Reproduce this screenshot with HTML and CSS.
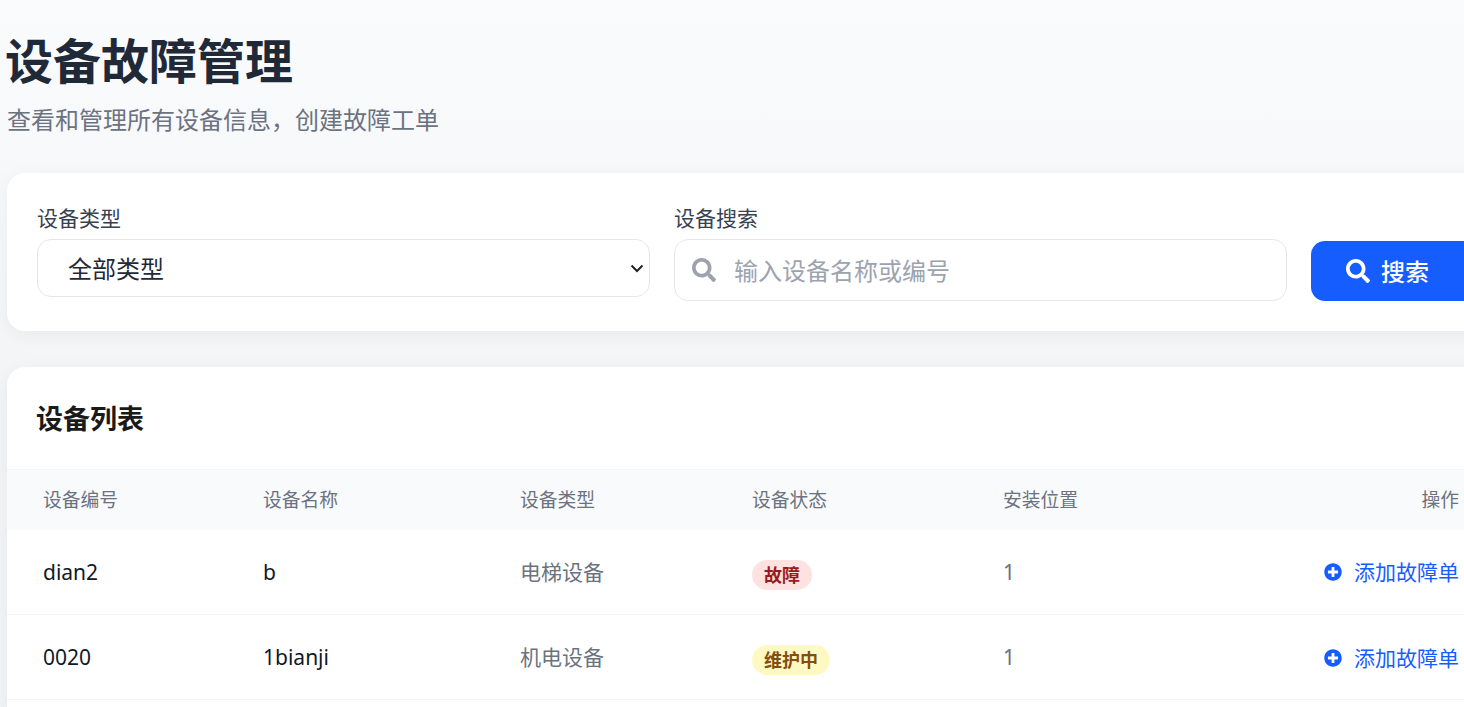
FILE: index.html
```html
<!DOCTYPE html>
<html lang="zh">
<head>
<meta charset="utf-8">
<title>设备故障管理</title>
<link rel="stylesheet" href="styles.css">
</head>
<body>
<main class="page">
  <header class="page-head">
    <h1 class="title">设备故障管理</h1>
    <p class="subtitle">查看和管理所有设备信息，创建故障工单</p>
  </header>
  <section class="card filters">
    <div class="field">
      <label class="label">设备类型</label>
      <select class="select"><option>全部类型</option></select>
    </div>
    <div class="field">
      <label class="label">设备搜索</label>
      <div class="search-box">
        <svg class="icon-search muted" viewBox="0 0 512 512"><path d="M505 442.7L405.3 343c-4.5-4.5-10.6-7-17-7H372c27.6-35.3 44-79.7 44-128C416 93.1 322.9 0 208 0S0 93.1 0 208s93.1 208 208 208c48.3 0 92.7-16.4 128-44v16.3c0 6.4 2.5 12.5 7 17l99.7 99.7c9.4 9.4 24.6 9.4 33.9 0l28.3-28.3c9.4-9.4 9.4-24.6.1-34zM208 336c-70.7 0-128-57.2-128-128 0-70.7 57.2-128 128-128 70.7 0 128 57.2 128 128 0 70.7-57.2 128-128 128z"/></svg>
        <input class="input" placeholder="输入设备名称或编号">
      </div>
    </div>
    <button class="btn">
      <svg class="icon-search" viewBox="0 0 512 512"><path d="M505 442.7L405.3 343c-4.5-4.5-10.6-7-17-7H372c27.6-35.3 44-79.7 44-128C416 93.1 322.9 0 208 0S0 93.1 0 208s93.1 208 208 208c48.3 0 92.7-16.4 128-44v16.3c0 6.4 2.5 12.5 7 17l99.7 99.7c9.4 9.4 24.6 9.4 33.9 0l28.3-28.3c9.4-9.4 9.4-24.6.1-34zM208 336c-70.7 0-128-57.2-128-128 0-70.7 57.2-128 128-128 70.7 0 128 57.2 128 128 0 70.7-57.2 128-128 128z"/></svg>
      <span>搜索</span>
    </button>
  </section>
  <section class="card list">
    <h2 class="list-title">设备列表</h2>
    <table class="table">
      <thead>
        <tr>
          <th class="col-id">设备编号</th>
          <th class="col-name">设备名称</th>
          <th class="col-type">设备类型</th>
          <th class="col-status">设备状态</th>
          <th class="col-loc">安装位置</th>
          <th class="col-act">操作</th>
        </tr>
      </thead>
      <tbody>
        <tr>
          <td class="strong">dian2</td>
          <td class="strong">b</td>
          <td>电梯设备</td>
          <td class="status"><span class="badge badge-fault">故障</span></td>
          <td class="num">1</td>
          <td class="col-act"><a class="link"><svg class="icon-plus" viewBox="0 0 512 512"><path d="M256 8C119 8 8 119 8 256s111 248 248 248 248-111 248-248S393 8 256 8zm144 276c0 6.6-5.4 12-12 12h-92v92c0 6.6-5.4 12-12 12h-56c-6.6 0-12-5.4-12-12v-92h-92c-6.6 0-12-5.4-12-12v-56c0-6.6 5.4-12 12-12h92v-92c0-6.6 5.4-12 12-12h56c6.6 0 12 5.4 12 12v92h92c6.6 0 12 5.4 12 12v56z"/></svg>添加故障单</a></td>
        </tr>
        <tr>
          <td class="strong">0020</td>
          <td class="strong">1bianji</td>
          <td>机电设备</td>
          <td class="status"><span class="badge badge-maint">维护中</span></td>
          <td class="num">1</td>
          <td class="col-act"><a class="link"><svg class="icon-plus" viewBox="0 0 512 512"><path d="M256 8C119 8 8 119 8 256s111 248 248 248 248-111 248-248S393 8 256 8zm144 276c0 6.6-5.4 12-12 12h-92v92c0 6.6-5.4 12-12 12h-56c-6.6 0-12-5.4-12-12v-92h-92c-6.6 0-12-5.4-12-12v-56c0-6.6 5.4-12 12-12h92v-92c0-6.6 5.4-12 12-12h56c6.6 0 12 5.4 12 12v92h92c6.6 0 12 5.4 12 12v56z"/></svg>添加故障单</a></td>
        </tr>
      </tbody>
    </table>
  </section>
</main>
</body>
</html>
```
FILE: styles.css
```css
* { box-sizing: border-box; }
html, body { margin: 0; height: 100%; overflow: hidden; }
body {
  background: linear-gradient(180deg, #fafbfc 0, #f8f9fb 120px, #f3f4f6 420px);
  font-family: "Noto Sans", "Noto Sans CJK SC", sans-serif;
  color: #1f2937;
}
.page { width: 1487px; margin-left: 7px; padding-top: 26px; }
.page-head { height: 147px; }
.title { margin: 0 0 0 -2px; padding-top: 1px; font-size: 48px; line-height: 68px; font-weight: 700; color: #1f2937; }
.subtitle { margin: 0; font-size: 24px; line-height: 36px; padding-top: 7px; color: #6b7280; }
.card { background: #fff; border-radius: 18px; box-shadow: 0 4px 18px rgba(0,0,0,.05); }
.filters {
  height: 158px;
  padding: 30px;
  display: grid;
  grid-template-columns: 613px 613px 1fr;
  column-gap: 24px;
  align-items: start;
}
.field { display: flex; flex-direction: column; }
.label { font-size: 21px; line-height: 30px; margin-bottom: 6px; color: #374151; }
.select {
  appearance: none;
  width: 100%; height: 58px;
  border: 1px solid #e5e7eb; border-radius: 14px;
  background: #fff url("data:image/svg+xml,%3Csvg xmlns='http://www.w3.org/2000/svg' viewBox='0 0 14 9'%3E%3Cpath d='M1.5 1.5 7 7l5.5-5.5' fill='none' stroke='%23222' stroke-width='2'/%3E%3C/svg%3E") no-repeat right 5px center / 14px 9px;
  padding: 0 30px;
  font: inherit; font-size: 24px; color: #1f2937;
}
.search-box {
  height: 62px;
  border: 1px solid #e5e7eb; border-radius: 14px;
  display: flex; align-items: center; gap: 18px;
  padding-left: 17px;
}
.input {
  flex: 1; border: 0; outline: 0; background: transparent; min-width: 0; padding: 0 2px 0 0;
  font: inherit; font-size: 24px; color: #1f2937;
}
.input::placeholder { color: #9ca3af; opacity: 1; }
.icon-search { width: 24px; height: 24px; fill: currentColor; flex: none; }
.muted { color: #9ca3af; }
.btn {
  margin-top: 38px;
  width: 183px; height: 60px;
  border: 0; border-radius: 14px;
  background: #165dff; color: #fff;
  display: flex; align-items: center; gap: 11px;
  padding: 0 35px;
  font: inherit; font-size: 24px; font-weight: 500;
}
.btn span { padding-bottom: 2px; }
.list { margin-top: 36px; overflow: hidden; padding-bottom: 40px; }
.list-title { margin: 0; height: 102px; line-height: 104px; padding-left: 29px; font-size: 27px; font-weight: 700; color: #1a1a1a; }
.table { width: 100%; border-collapse: collapse; table-layout: fixed; }
.table th {
  height: 60px; padding: 0 36px 2px; text-align: left;
  font-size: 18.75px; font-weight: 400; color: #6b7280;
  background: #f9fafb; border-top: 1px solid #f3f4f6;
}
.table td {
  height: 85px; padding: 0 36px 2px;
  font-size: 21px; color: #6b7280;
  border-bottom: 1px solid #f3f4f6;
}
.table td.strong { color: #111827; padding-bottom: 0; }
.table td.num { padding-bottom: 0; }
.table td.status { padding-top: 6px; padding-bottom: 0; }
.table .col-act { text-align: right; padding-right: 35px; }
.table td.col-act { padding-bottom: 0; }
.col-id { width: 220px; }
.col-name { width: 257px; }
.col-type { width: 232px; }
.col-status { width: 251px; }
.col-loc { width: 200px; }
.badge {
  display: block; width: fit-content; height: 30px; line-height: 30px;
  padding: 0 12px; border-radius: 15px;
  font-size: 18px; font-weight: 700;
}
.badge-fault { background: #fee2e2; color: #991b1b; }
.badge-maint { background: #fef9c3; color: #854d0e; }
.link { display: inline-flex; align-items: center; gap: 12px; color: #165dff; }
.icon-plus { width: 18px; height: 18px; fill: currentColor; flex: none; margin-top: 2px; }
```
